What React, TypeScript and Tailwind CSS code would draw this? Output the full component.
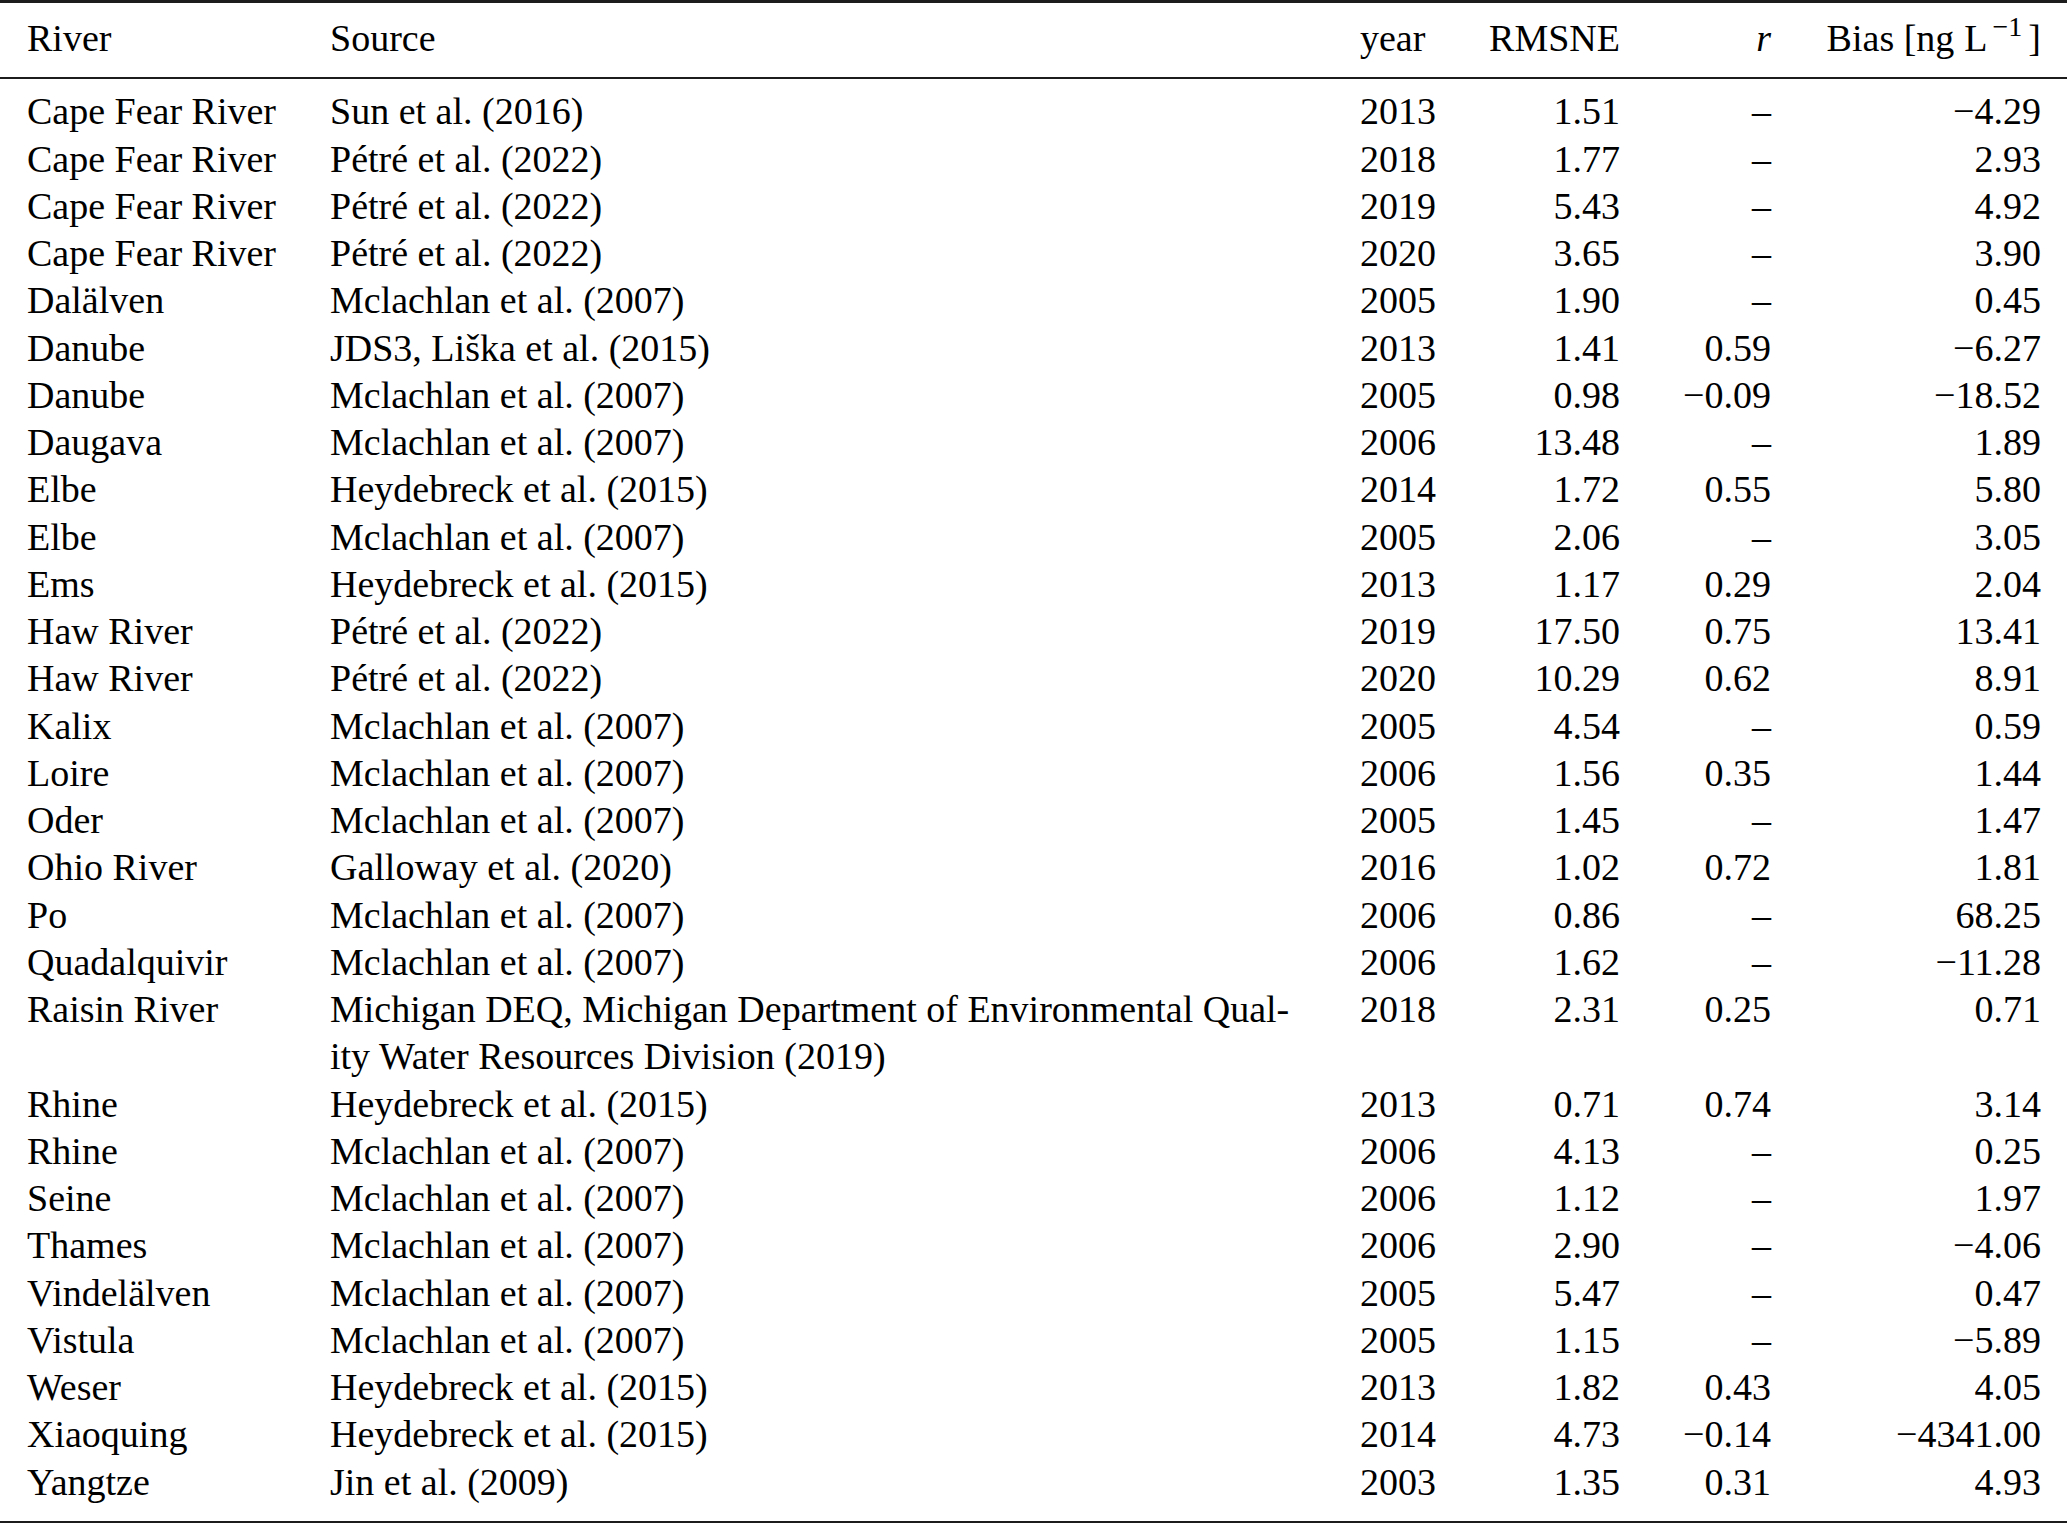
import React from "react";

type Row = {
  river: string;
  source: React.ReactNode;
  year: string;
  rmsne: string;
  r: string;
  bias: string;
};

const mc = "Mclachlan et al. (2007)";
const hey = "Heydebreck et al. (2015)";
const pet = "Pétré et al. (2022)";

const rows: Row[] = [
  { river: "Cape Fear River", source: "Sun et al. (2016)", year: "2013", rmsne: "1.51", r: "–", bias: "−4.29" },
  { river: "Cape Fear River", source: pet, year: "2018", rmsne: "1.77", r: "–", bias: "2.93" },
  { river: "Cape Fear River", source: pet, year: "2019", rmsne: "5.43", r: "–", bias: "4.92" },
  { river: "Cape Fear River", source: pet, year: "2020", rmsne: "3.65", r: "–", bias: "3.90" },
  { river: "Dalälven", source: mc, year: "2005", rmsne: "1.90", r: "–", bias: "0.45" },
  { river: "Danube", source: "JDS3, Liška et al. (2015)", year: "2013", rmsne: "1.41", r: "0.59", bias: "−6.27" },
  { river: "Danube", source: mc, year: "2005", rmsne: "0.98", r: "−0.09", bias: "−18.52" },
  { river: "Daugava", source: mc, year: "2006", rmsne: "13.48", r: "–", bias: "1.89" },
  { river: "Elbe", source: hey, year: "2014", rmsne: "1.72", r: "0.55", bias: "5.80" },
  { river: "Elbe", source: mc, year: "2005", rmsne: "2.06", r: "–", bias: "3.05" },
  { river: "Ems", source: hey, year: "2013", rmsne: "1.17", r: "0.29", bias: "2.04" },
  { river: "Haw River", source: pet, year: "2019", rmsne: "17.50", r: "0.75", bias: "13.41" },
  { river: "Haw River", source: pet, year: "2020", rmsne: "10.29", r: "0.62", bias: "8.91" },
  { river: "Kalix", source: mc, year: "2005", rmsne: "4.54", r: "–", bias: "0.59" },
  { river: "Loire", source: mc, year: "2006", rmsne: "1.56", r: "0.35", bias: "1.44" },
  { river: "Oder", source: mc, year: "2005", rmsne: "1.45", r: "–", bias: "1.47" },
  { river: "Ohio River", source: "Galloway et al. (2020)", year: "2016", rmsne: "1.02", r: "0.72", bias: "1.81" },
  { river: "Po", source: mc, year: "2006", rmsne: "0.86", r: "–", bias: "68.25" },
  { river: "Quadalquivir", source: mc, year: "2006", rmsne: "1.62", r: "–", bias: "−11.28" },
  {
    river: "Raisin River",
    source: (
      <>
        <span className="block whitespace-nowrap">Michigan DEQ, Michigan Department of Environmental Qual-</span>
        <span className="block whitespace-nowrap">ity Water Resources Division (2019)</span>
      </>
    ),
    year: "2018",
    rmsne: "2.31",
    r: "0.25",
    bias: "0.71",
  },
  { river: "Rhine", source: hey, year: "2013", rmsne: "0.71", r: "0.74", bias: "3.14" },
  { river: "Rhine", source: mc, year: "2006", rmsne: "4.13", r: "–", bias: "0.25" },
  { river: "Seine", source: mc, year: "2006", rmsne: "1.12", r: "–", bias: "1.97" },
  { river: "Thames", source: mc, year: "2006", rmsne: "2.90", r: "–", bias: "−4.06" },
  { river: "Vindelälven", source: mc, year: "2005", rmsne: "5.47", r: "–", bias: "0.47" },
  { river: "Vistula", source: mc, year: "2005", rmsne: "1.15", r: "–", bias: "−5.89" },
  { river: "Weser", source: hey, year: "2013", rmsne: "1.82", r: "0.43", bias: "4.05" },
  { river: "Xiaoquing", source: hey, year: "2014", rmsne: "4.73", r: "−0.14", bias: "−4341.00" },
  { river: "Yangtze", source: "Jin et al. (2009)", year: "2003", rmsne: "1.35", r: "0.31", bias: "4.93" },
];

const grid = "grid grid-cols-[303px_1030px_120px_140px_151px_270px] pl-[27px] pr-[26px]";

export default function App() {
  return (
    <div
      className="w-[2067px] h-[1523px] bg-white text-black text-[38px] leading-[47.25px]"
      style={{ fontFamily: '"Liberation Serif", "Times New Roman", serif' }}
    >
      <div className="border-t-[3px] border-[#1c1c1c]">
        {/* header */}
        <div className={`${grid} pt-[12px] pb-[12px] border-b-[2px] border-[#1c1c1c]`}>
          <div>River</div>
          <div>Source</div>
          <div>year</div>
          <div className="text-right">RMSNE</div>
          <div className="text-right italic">r</div>
          <div className="text-right whitespace-nowrap">
            Bias [ng<span className="inline-block w-[10px]" />L<span className="relative -top-[15px] ml-[5px] mr-[6px] text-[28px]">−1</span>]
          </div>
        </div>

        {/* body */}
        <div className="pt-[9px] pb-[15px] border-b-[3px] border-[#1c1c1c]">
          {rows.map((row, i) => (
            <div key={i} className={grid}>
              <div className="whitespace-nowrap">{row.river}</div>
              <div className="whitespace-nowrap">{row.source}</div>
              <div>{row.year}</div>
              <div className="text-right">{row.rmsne}</div>
              <div className="text-right">{row.r}</div>
              <div className="text-right">{row.bias}</div>
            </div>
          ))}
        </div>
      </div>
    </div>
  );
}
